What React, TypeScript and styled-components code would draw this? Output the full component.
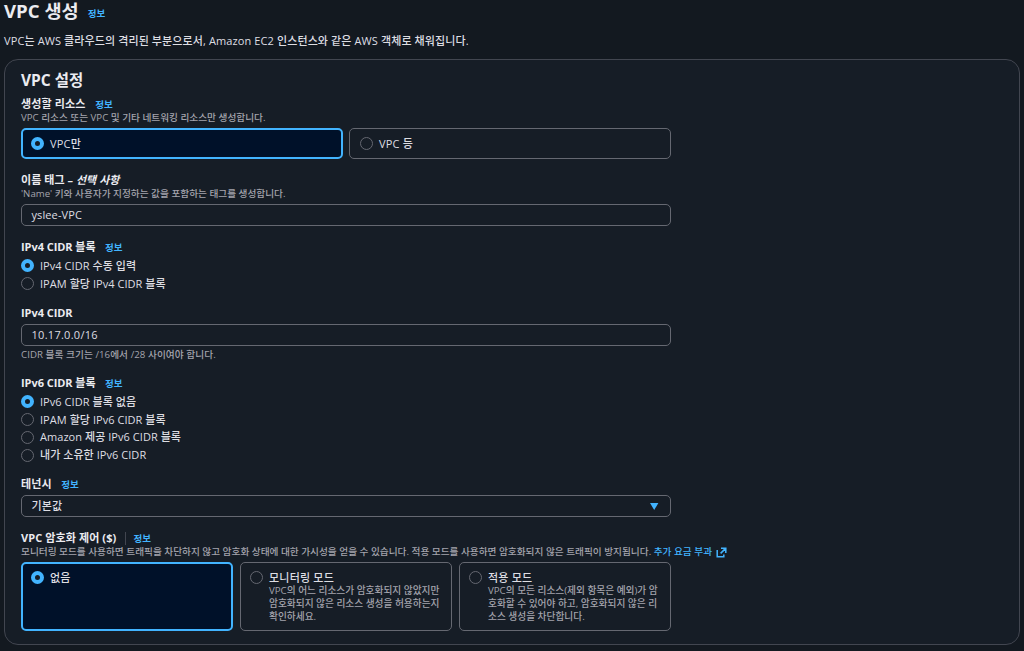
import React, { FunctionComponent, ReactNode } from "react";
import styled, { createGlobalStyle } from "styled-components";

const GlobalStyle = createGlobalStyle`
  * {
    box-sizing: border-box;
  }
  body {
    margin: 0;
    background: #131920;
    color: #dedee3;
    font-family: "Open Sans", "Noto Sans CJK KR", sans-serif;
    font-size: 11px;
    font-weight: 500;
  }
`;

const Page = styled.main`
  height: 651px;
  padding: 0 4px;
`;

const PageHeader = styled.header`
  display: flex;
  align-items: flex-start;
  height: 24px;
`;

const PageTitle = styled.h1`
  margin: 0;
  color: #ebebf0;
  font-size: 18.6px;
  line-height: 22px;
  font-weight: 700;
  white-space: nowrap;
`;

const InfoLink = styled.a<{ $gap?: number }>`
  margin-left: ${(props) => props.$gap ?? 10}px;
  padding-top: 1px;
  color: #42b4ff;
  font-size: 9.5px;
  line-height: 14px;
  font-weight: 700;
  white-space: nowrap;
`;

const HeaderInfo = styled(InfoLink)`
  margin-top: 6px;
`;

const PageDescription = styled.p`
  margin: 9px 0 10px;
  height: 16px;
  font-size: 11px;
  line-height: 16px;
  letter-spacing: 0.11px;
  white-space: nowrap;
`;

const Card = styled.section`
  height: 586px;
  padding: 10px 16px 0;
  border: 1px solid #424650;
  border-radius: 14px;
  background: #161d26;
`;

const CardTitle = styled.h2`
  margin: 0 0 7px;
  color: #ebebf0;
  font-size: 15.5px;
  line-height: 20px;
  font-weight: 700;
`;

const FieldBox = styled.div<{ $after: number }>`
  width: 650px;
  margin-bottom: ${(props) => props.$after}px;
`;

const LabelRow = styled.div`
  display: flex;
  align-items: center;
  height: 14px;
`;

const Label = styled.span<{ $spacing: number }>`
  color: #ebebf0;
  font-size: 11px;
  line-height: 14px;
  font-weight: 700;
  letter-spacing: ${(props) => props.$spacing}px;
  white-space: nowrap;
`;

const Divider = styled.span`
  width: 1px;
  height: 13px;
  margin-left: 9px;
  background: #424650;
`;

const Hint = styled.div`
  height: 14px;
  color: #a4a4ad;
  font-size: 9.67px;
  line-height: 14px;
  white-space: nowrap;
`;

const HintLink = styled.a`
  color: #42b4ff;

  svg {
    margin-left: 4px;
    vertical-align: -3px;
  }
`;

const Input = styled.div<{ $spacing?: number }>`
  display: flex;
  align-items: center;
  justify-content: space-between;
  height: 22px;
  margin-top: 3px;
  padding: 0 10px 0 9.5px;
  border: 1px solid #656871;
  border-radius: 5px;
  font-size: 11px;
  line-height: 16px;
  letter-spacing: ${(props) => props.$spacing ?? 0.1}px;

  ${LabelRow} + & {
    margin-top: 4px;
  }

  & + ${Hint} {
    margin-top: 2px;
    letter-spacing: 0.06px;
  }
`;

const RadioList = styled.div`
  display: grid;
  grid-auto-rows: 17.75px;
  margin-top: 3px;
`;

const RadioRow = styled.div`
  display: flex;
  align-items: center;
  gap: 6px;
  font-size: 11px;
  line-height: 16px;
  letter-spacing: 0.05px;
  white-space: nowrap;
`;

const Radio = styled.span<{ $checked?: boolean }>`
  flex: none;
  width: 13px;
  height: 13px;
  border: ${(props) =>
    props.$checked ? "4px solid #42b4ff" : "1px solid #656871"};
  border-radius: 50%;
  background: #161d26;
`;

const TileBox = styled.div<{ $selected?: boolean }>`
  display: flex;
  align-items: flex-start;
  gap: 6px;
  padding: ${(props) => (props.$selected ? "6px 8px" : "7px 9px")};
  border: ${(props) =>
    props.$selected ? "2px solid #42b4ff" : "1px solid #656871"};
  border-radius: 5px;
  background: ${(props) => (props.$selected ? "#001129" : "transparent")};
  white-space: nowrap;

  ${Radio} {
    margin-top: 1px;
  }
`;

const Tiles = styled.div<{ $columns: number; $height: number }>`
  display: grid;
  grid-template-columns: repeat(${(props) => props.$columns}, 1fr);
  column-gap: ${(props) => (props.$columns === 2 ? 6 : 7)}px;
  height: ${(props) => props.$height}px;
  margin-top: 3px;

  ${TileBox}:nth-child(2) {
    padding-left: ${(props) => (props.$columns === 2 ? 10 : 9)}px;
  }
`;

const TileTitle = styled.div`
  height: 15px;
  padding-top: 1px;
  font-size: 11px;
  line-height: 14px;
  letter-spacing: 0.2px;
`;

const TileText = styled.div`
  color: #a4a4ad;
  font-size: 9.7px;
  line-height: 12.75px;
`;

type FieldProps = {
  label: ReactNode;
  labelSpacing?: number;
  info?: boolean;
  divider?: boolean;
  description?: ReactNode;
  after?: number;
  children: ReactNode;
};

const Field: FunctionComponent<FieldProps> = (props) => {
  const { label, info, divider, description, children } = props;
  const { labelSpacing = 0, after = 14 } = props;

  return (
    <FieldBox $after={after}>
      <LabelRow>
        <Label $spacing={labelSpacing}>{label}</Label>
        {divider && <Divider />}
        {info && <InfoLink $gap={divider ? 7 : 9.5}>정보</InfoLink>}
      </LabelRow>
      {description && <Hint>{description}</Hint>}
      {children}
    </FieldBox>
  );
};

type RadioGroupProps = {
  options: string[];
};

// The first option is always the default one
const RadioGroup: FunctionComponent<RadioGroupProps> = ({ options }) => (
  <RadioList>
    {options.map((option, index) => (
      <RadioRow key={option}>
        <Radio $checked={index === 0} />
        {option}
      </RadioRow>
    ))}
  </RadioList>
);

type TileProps = {
  title: string;
  lines?: string[];
  selected?: boolean;
};

const Tile: FunctionComponent<TileProps> = ({ title, lines, selected }) => (
  <TileBox $selected={selected}>
    <Radio $checked={selected} />
    <div>
      <TileTitle>{title}</TileTitle>
      {lines?.map((line) => (
        <TileText key={line}>{line}</TileText>
      ))}
    </div>
  </TileBox>
);

const CaretDown = () => (
  <svg width="11" height="8" viewBox="0 0 11 8">
    <path d="M1 1h8.4L5.2 8z" fill="#42b4ff" />
  </svg>
);

const ExternalIcon = () => (
  <svg
    width="11"
    height="11"
    viewBox="0 0 11 11"
    fill="none"
    stroke="#42b4ff"
    strokeWidth="1.5"
  >
    <path d="M5 1.2h4.8V6M9.6 1.4 4.6 6.4M1.2 3v6.8h6.6V7.5" />
  </svg>
);

const App: FunctionComponent = () => {
  return (
    <>
      <GlobalStyle />
      <Page>
        <PageHeader>
          <PageTitle>VPC 생성</PageTitle>
          <HeaderInfo $gap={9}>정보</HeaderInfo>
        </PageHeader>
        <PageDescription>
          VPC는 AWS 클라우드의 격리된 부분으로서, Amazon EC2 인스턴스와 같은 AWS
          객체로 채워집니다.
        </PageDescription>
        <Card>
          <CardTitle>VPC 설정</CardTitle>

          <Field
            label="생성할 리소스"
            labelSpacing={0.15}
            info
            description="VPC 리소스 또는 VPC 및 기타 네트워킹 리소스만 생성합니다."
          >
            <Tiles $columns={2} $height={31}>
              <Tile title="VPC만" selected />
              <Tile title="VPC 등" />
            </Tiles>
          </Field>

          <Field
            label={
              <>
                이름 태그 – <i>선택 사항</i>
              </>
            }
            labelSpacing={0.05}
            description="'Name' 키와 사용자가 지정하는 값을 포함하는 태그를 생성합니다."
          >
            <Input>yslee-VPC</Input>
          </Field>

          <Field label="IPv4 CIDR 블록" labelSpacing={-0.05} info after={13.5}>
            <RadioGroup
              options={["IPv4 CIDR 수동 입력", "IPAM 할당 IPv4 CIDR 블록"]}
            />
          </Field>

          <Field label="IPv4 CIDR" labelSpacing={-0.05}>
            <Input $spacing={0.28}>10.17.0.0/16</Input>
            <Hint>CIDR 블록 크기는 /16에서 /28 사이여야 합니다.</Hint>
          </Field>

          <Field label="IPv6 CIDR 블록" labelSpacing={-0.05} info after={13}>
            <RadioGroup
              options={[
                "IPv6 CIDR 블록 없음",
                "IPAM 할당 IPv6 CIDR 블록",
                "Amazon 제공 IPv6 CIDR 블록",
                "내가 소유한 IPv6 CIDR",
              ]}
            />
          </Field>

          <Field label="테넌시" labelSpacing={0.15} info>
            <Input>
              기본값
              <CaretDown />
            </Input>
          </Field>

          <Field
            label="VPC 암호화 제어 ($)"
            labelSpacing={0.1}
            info
            divider
            description={
              <>
                모니터링 모드를 사용하면 트래픽을 차단하지 않고 암호화 상태에
                대한 가시성을 얻을 수 있습니다. 적용 모드를 사용하면 암호화되지
                않은 트래픽이 방지됩니다.{" "}
                <HintLink>
                  추가 요금 부과
                  <ExternalIcon />
                </HintLink>
              </>
            }
          >
            <Tiles $columns={3} $height={69}>
              <Tile title="없음" selected />
              <Tile
                title="모니터링 모드"
                lines={[
                  "VPC의 어느 리소스가 암호화되지 않았지만",
                  "암호화되지 않은 리소스 생성을 허용하는지",
                  "확인하세요.",
                ]}
              />
              <Tile
                title="적용 모드"
                lines={[
                  "VPC의 모든 리소스(제외 항목은 예외)가 암",
                  "호화할 수 있어야 하고, 암호화되지 않은 리",
                  "소스 생성을 차단합니다.",
                ]}
              />
            </Tiles>
          </Field>
        </Card>
      </Page>
    </>
  );
};

export default App;
